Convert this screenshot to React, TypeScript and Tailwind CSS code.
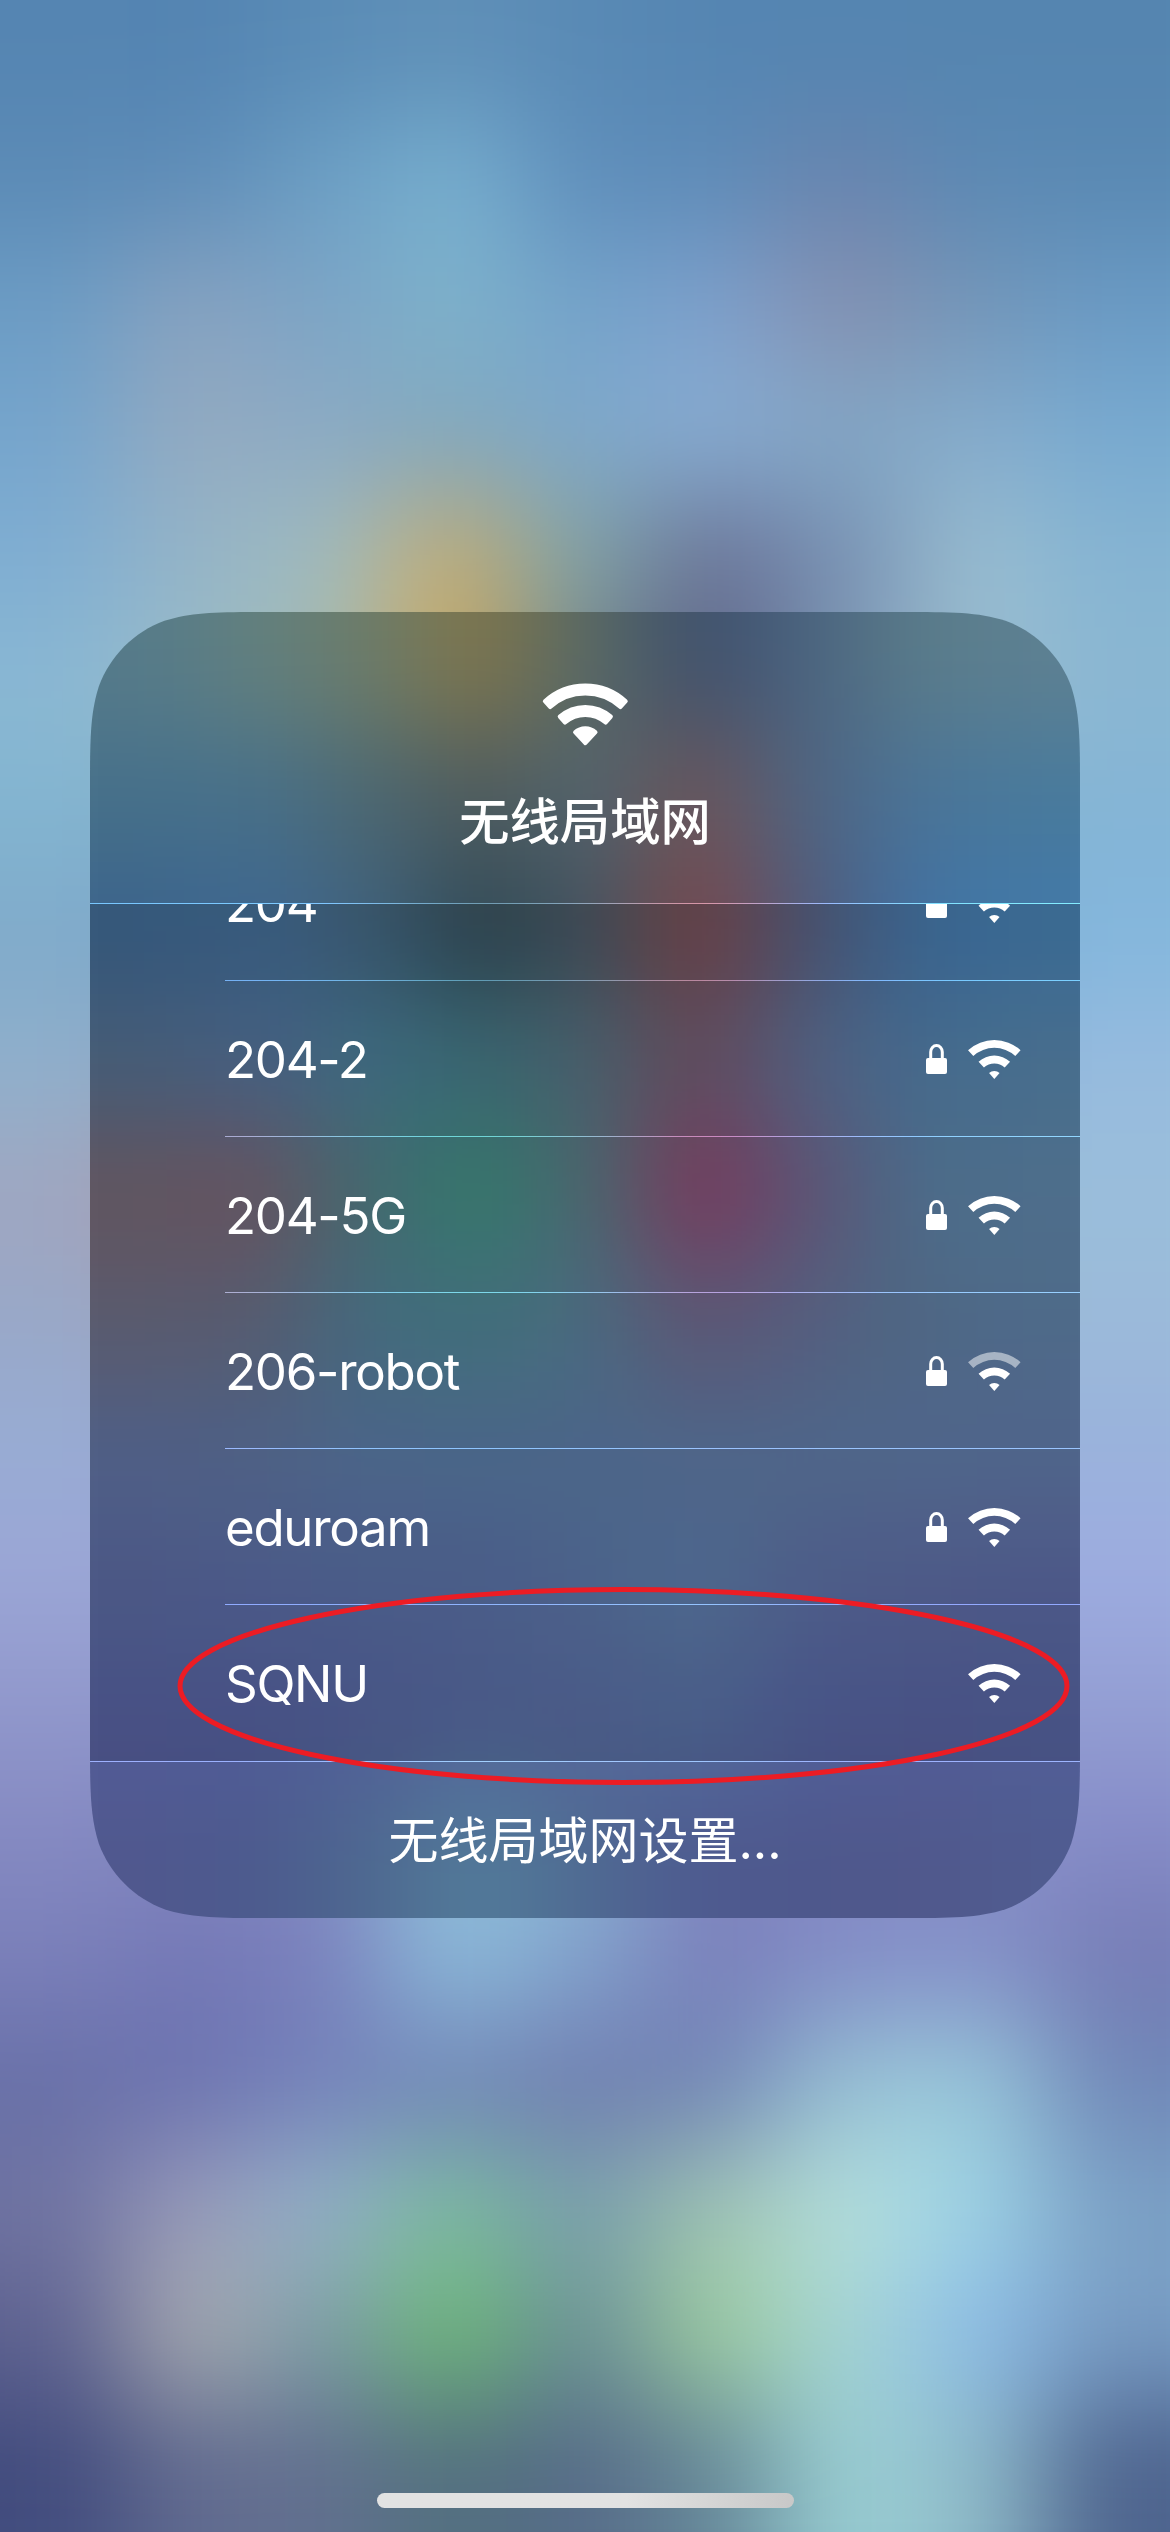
type Network = {
  name: string;
  secured: boolean;
  bars: 2 | 3;
};

const networks: Network[] = [
  { name: "204", secured: true, bars: 3 },
  { name: "204-2", secured: true, bars: 3 },
  { name: "204-5G", secured: true, bars: 3 },
  { name: "206-robot", secured: true, bars: 2 },
  { name: "eduroam", secured: true, bars: 3 },
  { name: "SQNU", secured: false, bars: 3 },
];

// Colour samples of the wallpaper, top to bottom. Each row is one line of cells.
const wallpaper = [
  "5585b2 5484b2 5a8cb6 6090b8 598ab5 5585b2 5585b1 5585b0 5585b0",
  "5c8bb6 5f8db8 6c9fc4 78b0d0 5f8ebb 5f8cb8 6a84ae 5c89b4 5a89b3",
  "6c9cc4 88a2c0 7ca4c6 7eb2ca 74a3ca 7ea0cc 8690b0 7496b8 6a9ac4",
  "76a5cc 94aac0 8caac4 82a8be 7ea8cb 88acd2 82a6c4 86accc 78aad0",
  "80aed2 94b4c8 a0bcbe c6ac70 80a2a4 6a7296 7890b2 9abed0 86b4d2",
  "8ab8d3 9abcc8 a4b8b0 c8a860 70848a 5c6488 7c98b4 9abcd0 8ab7d2",
  "82b4d0 84b0cc 84b0cc 84b0cc 84b0cc 84b0cc 84b0cc 84b4d0 84b4d6",
  "80aaca 7ba5c8 7ba5c8 7ba5c8 7ba5c8 7ba5c8 7ba5c8 7eb2da 84b7dd",
  "90b0cc 90a6c4 90a6c4 90a6c4 90a6c4 90a6c4 90a6c4 94b8dc 97bbde",
  "a0a6c0 a89aac a0a0b8 98a8c0 98a8c0 98a8c0 98b0cc 9abcd8 9abedb",
  "98a8c8 9ca4bc 98a8c4 98a8c4 98a8c4 98a8c4 98b0d0 9ab8d8 9bbad9",
  "98acd4 98a8d2 98a8d2 98a8d2 98a8d2 98a8d2 98acd4 9ab0da 9ab2dc",
  "9ba6d6 9ba6d6 9ba6d6 9ba6d6 9ba6d6 9ba6d6 9ba8d8 9caade 9dace0",
  "9198cc 9198cc 9198cc 9198cc 9198cc 9198cc 929ad0 949ed2 949fd4",
  "858ac2 8286c0 848cc4 8cbcd8 8cb6d4 8084c0 868cc6 8890c8 868cc8",
  "7b80ba 7478b6 7a80bc 8cbcda 82a2cc 7a7fba 828cc6 8490c8 777db6",
  "6870a8 6c73b0 7482ba 7288b8 707eb0 7286b6 96c0d4 98c8da 7088b8",
  "7074a2 9a9cba 94b2c8 7cbca0 7aa0ac a0c4b2 b6e0dc 9ed4e6 7ca2c6",
  "5e6290 a8aab0 7c9ca6 6cb874 6a8f96 9ccc9c a4d4d4 8cbce8 789cc4",
  "424c7e 626b90 62708f 52707e 566a88 668898 9acfd3 90bcca 4e648e",
];

// Same thing for the tinted material behind the card.
const material = [
  "567b8a 62807f 6c7c6a 80754a 586a66 40506c 4b6480 5a7c8a 5d8092",
  "46708a 47708a 4c6872 4e5a5c 51646f 6c5458 4e6482 4a7498 487a9c",
  "3b638b 3e6791 40627d 2f4854 445461 7c464a 505a7b 4072a4 4278a8",
  "506a88 506c94 467991 407480 526c7b 705468 5b6d92 4e79a1 527ea1",
  "70606c 765e6c 4d787f 3a8a7a 54757f 8c4068 6a5f84 567b9d 597e9f",
  "66687e 626880 4d7990 4a7f8b 547992 6a6284 606c91 597696 59799d",
  "5a6c9a 596f98 56739d 55749b 56749d 59749d 5a749d 5b749f 5c739f",
  "566498 56669b 55699b 55699b 56709e 5877a2 58699b 58669a 57649a",
  "525c98 505c98 526099 54669a 55669a 546c9c 525f9a 525d98 515e98",
  "50588e 4c5a8e 4e6890 527c9a 4f6a92 4e5a90 4e588c 50588c 505c90",
];

function padEnds<T>(items: T[]): T[] {
  return [items[0], ...items, items[items.length - 1]];
}

function Mesh({ rows, className }: { rows: string[]; className: string }) {
  const cells = padEnds(rows).flatMap((row) => padEnds(row.split(" ")));
  return (
    <div className={`absolute grid grid-cols-11 ${className}`} aria-hidden="true">
      {cells.map((color, i) => (
        <div key={i} style={{ backgroundColor: `#${color}` }} />
      ))}
    </div>
  );
}

// Slice of a ring that points up, `half` degrees to each side of the vertical
function band(cx: number, cy: number, outer: number, inner: number, half: number) {
  const a = (half * Math.PI) / 180;
  const s = Math.sin(a);
  const c = Math.cos(a);
  const start = `M${cx - outer * s} ${cy - outer * c}A${outer} ${outer} 0 0 1 ${cx + outer * s} ${cy - outer * c}`;
  if (inner === 0) return `${start}L${cx} ${cy}Z`;
  return `${start}L${cx + inner * s} ${cy - inner * c}A${inner} ${inner} 0 0 0 ${cx - inner * s} ${cy - inner * c}Z`;
}

function HeaderWifiIcon() {
  return (
    <svg
      className="h-[64px] w-[90px] fill-white stroke-white"
      viewBox="0 0 90 64"
      strokeWidth="4"
      strokeLinejoin="round"
    >
      <path d={band(45.3, 62.5, 60, 52, 42.4)} />
      <path d={band(45.3, 62.5, 38.6, 30.6, 41.5)} />
      <path d={band(45.3, 60.2, 15, 0, 43)} />
    </svg>
  );
}

function WifiIcon({ bars }: { bars: 2 | 3 }) {
  return (
    <svg className="h-10 w-[54px] fill-white" viewBox="0 0 54 40">
      <path d={band(27.3, 40, 39, 31.2, 42.3)} opacity={bars === 3 ? 1 : 0.5} />
      <path d={band(27.3, 40, 23.4, 15.4, 42.3)} />
      <path d={band(27.3, 40, 8, 0, 41)} />
    </svg>
  );
}

function LockIcon() {
  return (
    <svg className="h-[30px] w-[21px]" viewBox="0 0 21 30" fill="none">
      <rect y="14" width="21" height="16" rx="2" fill="white" />
      <path d="M4.7 15V8a5.8 6.4 0 0 1 11.6 0v7" stroke="white" strokeWidth="3" />
    </svg>
  );
}

function Hairline({ inset = false }: { inset?: boolean }) {
  return <div className={`h-px shrink-0 bg-[#7c7c7c] mix-blend-color-dodge ${inset ? "ml-[135px]" : ""}`} />;
}

function NetworkRow({ network, last }: { network: Network; last: boolean }) {
  return (
    <li className="flex h-[156px] shrink-0 flex-col">
      <div className="flex flex-1 items-center pr-[59px] pl-[135px]">
        <span className="flex-1 pt-0.5 text-[51px] leading-[60px] tracking-[-1.3px]">{network.name}</span>
        {network.secured && <LockIcon />}
        <span className="ml-5">
          <WifiIcon bars={network.bars} />
        </span>
      </div>
      {!last && <Hairline inset />}
    </li>
  );
}

export default function App() {
  return (
    <main className="relative flex h-[2532px] w-[1170px] flex-col items-center overflow-hidden bg-[#7f9fc8] pt-[612px] font-['Inter','Noto_Sans_CJK_SC',sans-serif] text-white">
      <Mesh rows={wallpaper} className="-top-[137px] -left-[136px] h-[2790px] w-[1436px] blur-[56px]" />

      {/* Card */}
      <section className="relative flex h-[1306px] w-[990px] flex-col [clip-path:path('M180_0H810C862_0_887.5_0_915.5_8.8C946_20_970_44_981.2_74.5C990_102.5_990_128_990_180V1126C990_1178_990_1203.5_981.2_1231.5C970_1262_946_1286_915.5_1297.2C887.5_1306_862_1306_810_1306H180C128_1306_102.5_1306_74.5_1297.2C44_1286_20_1262_8.8_1231.5C0_1203.5_0_1178_0_1126V180C0_128_0_102.5_8.8_74.5C20_44_44_20_74.5_8.8C102.5_0_128_0_180_0Z')]">
        <Mesh rows={material} className="-top-[145px] -left-[112px] h-[1582px] w-[1220px] blur-[50px]" />

        <header className="relative flex h-[291px] shrink-0 flex-col items-center pt-[71px]">
          <HeaderWifiIcon />
          <h1 className="mt-[45px] text-[50.3px] leading-[60px] font-medium">无线局域网</h1>
        </header>
        <Hairline />

        <ul className="relative flex h-[857px] shrink-0 flex-col justify-end overflow-hidden bg-black/12">
          {networks.map((network, i) => (
            <NetworkRow key={network.name} network={network} last={i === networks.length - 1} />
          ))}
        </ul>
        <Hairline />

        <button className="relative h-[156px] pt-0.5 text-[50px] leading-[60px]">无线局域网设置...</button>
      </section>

      {/* Hand-drawn marker around the open network */}
      <svg
        className="pointer-events-none absolute top-[1580px] left-[170px] h-[212px] w-[907px]"
        viewBox="0 0 907 212"
        fill="none"
      >
        <ellipse cx="453.5" cy="106" rx="443.5" ry="96.5" stroke="#ec1c24" strokeWidth="5" />
      </svg>

      {/* Home indicator */}
      <div className="relative mt-auto mb-6 h-[15px] w-[417px] rounded-full bg-linear-to-r from-[#e2e2e2] from-60% to-[#c8c8c8]" />
    </main>
  );
}
